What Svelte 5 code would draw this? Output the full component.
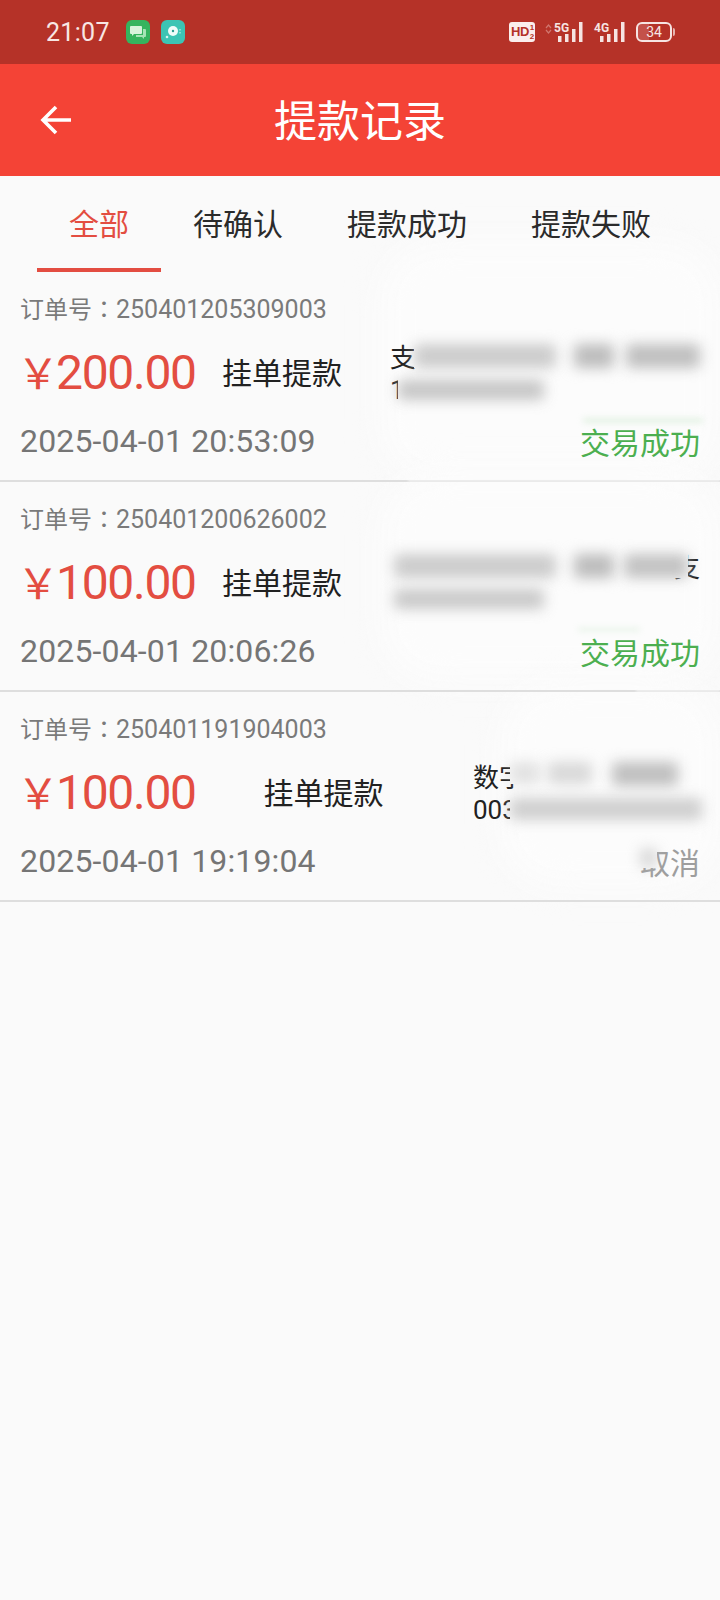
<script>
  const tabs = ['全部', '待确认', '提款成功', '提款失败'];
  const orders = [
    {
      no: '250401205309003', amount: '200.00', time: '2025-04-01 20:53:09',
      status: '交易成功', ok: true, line1: '支', line2: '1', end: '', acct: 'wide',
      halo: { x: 380, y: -30, w: 340, h: 240 },
      smears: [
        { x: 414, y: 72, w: 142, h: 24, o: 0.75 },
        { x: 574, y: 72, w: 40, h: 24, o: 1 }, { x: 626, y: 72, w: 74, h: 24, o: 0.95 },
        { x: 398, y: 108, w: 146, h: 20, o: 0.85 }
      ],
      tint: { x: 583, y: 146, w: 120, h: 5 }, wash: 408
    },
    {
      no: '250401200626002', amount: '100.00', time: '2025-04-01 20:06:26',
      status: '交易成功', ok: true, line1: '', line2: '', end: '支', acct: 'wide',
      halo: { x: 380, y: -10, w: 340, h: 210 },
      smears: [
        { x: 394, y: 72, w: 162, h: 24, o: 0.75 }, { x: 574, y: 72, w: 40, h: 24, o: 1 },
        { x: 624, y: 72, w: 64, h: 24, o: 0.9 }, { x: 394, y: 107, w: 150, h: 20, o: 0.8 }
      ],
      tint: { x: 578, y: 146, w: 62, h: 3 }, wash: 636
    },
    {
      no: '250401191904003', amount: '100.00', time: '2025-04-01 19:19:04',
      status: '取消', ok: false, line1: '数字', line2: '003', end: '', acct: 'narrow',
      halo: { x: 500, y: -10, w: 220, h: 205 },
      smears: [
        { x: 510, y: 70, w: 30, h: 22, o: 0.4 }, { x: 548, y: 70, w: 44, h: 22, o: 0.55 },
        { x: 612, y: 70, w: 66, h: 24, o: 0.95 }, { x: 510, y: 106, w: 192, h: 22, o: 0.7 },
        { x: 640, y: 156, w: 17, h: 20, o: 0.55 }
      ],
      tint: null, wash: null
    }
  ];
</script>

<div class="page">
  <div class="statusbar">
    <span class="clock">21:07</span>
    <svg class="appicon" viewBox="0 0 24 24" width="24" height="24">
      <rect width="24" height="24" rx="6" fill="#35b45e" />
      <path d="M5 6h10a1 1 0 0 1 1 1v6a1 1 0 0 1-1 1H8l-2 2v-2H5a1 1 0 0 1-1-1V7a1 1 0 0 1 1-1z" fill="#d8f3dc" />
      <path d="M17 9h2a1 1 0 0 1 1 1v6a1 1 0 0 1-1 1h-1v2l-2-2h-6v-2h7z" fill="#a5e4b5" />
    </svg>
    <svg class="appicon second" viewBox="0 0 24 24" width="24" height="24">
      <rect width="24" height="24" rx="6" fill="#3cc4b4" />
      <circle cx="12" cy="11" r="5" fill="#f0fbf9" />
      <circle cx="12" cy="11" r="1.2" fill="#2a9d90" />
      <circle cx="6" cy="17" r="1.3" fill="#d5f5f0" />
      <rect x="18.5" y="9" width="1" height="1.5" fill="#d5f5f0" />
      <rect x="18.5" y="12" width="1" height="1.5" fill="#d5f5f0" />
    </svg>
    <div class="sysicons">
      <span class="hd">HD<small>1<br />2</small></span>
      <div class="net first">
        <svg class="updown" viewBox="0 0 7 10" width="7" height="10"><path d="M1 4l2.5-3L6 4M1 6l2.5 3L6 6" fill="none" stroke="#d0766e" stroke-width="1.2" /></svg>
        <span class="gen">5G</span>
        <svg viewBox="0 0 26 20" width="26" height="20"><path d="M1 14h3.5v6H1zM8 12h3.5v8H8zM15 7h3.5v13H15zM22 0h3.5v20H22z" fill="#f6e4e2" /></svg>
      </div>
      <div class="net">
        <span class="gen">4G</span>
        <svg viewBox="0 0 26 20" width="26" height="20"><path d="M1 14h3.5v6H1zM8 12h3.5v8H8zM15 7h3.5v13H15zM22 0h3.5v20H22z" fill="#f6e4e2" /></svg>
      </div>
      <div class="battery"><span>34</span></div>
    </div>
  </div>

  <header class="appbar">
    <svg class="back" viewBox="0 0 32 32" width="32" height="32" aria-label="返回">
      <path d="M31 16H3M16 3 3 16l13 13" fill="none" stroke="#fff" stroke-width="3.6" />
    </svg>
    <h1>提款记录</h1>
  </header>

  <nav class="tabs">
    {#each tabs as tab, i}
      <div class="tab" class:active={i === 0}>{tab}</div>
    {/each}
  </nav>

  {#each orders as order}
    <section class="card">
      <div class="no"><span class="label">订单号<span class="colon">：</span></span>{order.no}</div>
      <div class="mid">
        <div class="amount"><span class="yen">￥</span>{order.amount}</div>
        <div class="type">挂单提款</div>
        <div class="acct {order.acct}">
          <div class="line"><span>{order.line1}</span><span>{order.end}</span></div>
          <div class="line">{order.line2}</div>
        </div>
      </div>
      <div class="bottom">
        <span class="time">{order.time}</span>
        <span class="status" class:ok={order.ok}>{order.status}</span>
      </div>

      <div class="halo" style="left:{order.halo.x}px;top:{order.halo.y}px;width:{order.halo.w}px;height:{order.halo.h}px"></div>
      {#each order.smears as s}
        <div class="cover" style="left:{s.x}px;top:{s.y}px;width:{s.w}px;height:{s.h}px"></div>
      {/each}
      {#each order.smears as s}
        <div class="smear" style="left:{s.x}px;top:{s.y}px;width:{s.w}px;height:{s.h}px;opacity:{s.o}"></div>
      {/each}
      {#if order.tint}
        <div class="tint" style="left:{order.tint.x}px;top:{order.tint.y}px;width:{order.tint.w}px;height:{order.tint.h}px"></div>
      {/if}
      {#if order.wash}
        <div class="wash" style="left:{order.wash}px;width:{720 - order.wash}px"></div>
      {/if}
    </section>
  {/each}
</div>

<style>
  :global(body) {
    margin: 0;
    background: #fafafa;
  }

  .page {
    width: 720px;
    height: 1600px;
    overflow: hidden;
    background: #fafafa;
    isolation: isolate;
    font-family: Roboto, "Noto Sans CJK SC", sans-serif;
    color: #212121;
  }

  .statusbar {
    height: 64px;
    background: #b53228;
    display: flex;
    align-items: center;
    padding: 0 48px 0 46px;
    box-sizing: border-box;
    color: #f8e6e4;
  }

  .clock {
    font-size: 25px;
    width: 80px;
    letter-spacing: 0.3px;
  }

  .appicon.second {
    margin-left: 11px;
  }

  .sysicons {
    margin-left: auto;
    display: flex;
    align-items: center;
    gap: 12px;
  }

  .hd {
    width: 26px;
    box-sizing: border-box;
    background: #fbeeed;
    color: #b53228;
    border-radius: 3px;
    font: 700 13px/20px "Liberation Sans", sans-serif;
    letter-spacing: -0.5px;
    padding-left: 2px;
    height: 20px;
    display: flex;
    align-items: center;
    margin-right: 7px;
  }

  .hd small {
    font-size: 8px;
    line-height: 9px;
    margin-left: 1px;
  }

  .net {
    position: relative;
    width: 30px;
    height: 20px;
    display: flex;
    justify-content: flex-end;
  }

  .net.first {
    width: 28px;
  }

  .gen {
    position: absolute;
    left: 0;
    top: 0;
    font: 700 12px/13px Roboto, sans-serif;
    color: #f6e4e2;
  }

  .updown {
    position: absolute;
    left: -9px;
    top: 2px;
  }

  .net svg:last-child {
    margin-right: -1px;
  }

  .battery {
    width: 36px;
    height: 20px;
    box-sizing: border-box;
    border: 2px solid #f6e4e2;
    border-radius: 6px;
    display: flex;
    align-items: center;
    justify-content: center;
    font-size: 14px;
    color: #f6e4e2;
    position: relative;
    background: linear-gradient(90deg, #c4514a 34%, transparent 34%);
  }

  .battery::after {
    content: "";
    position: absolute;
    right: -5px;
    top: 4px;
    width: 2px;
    height: 8px;
    background: #e6b3ae;
    border-radius: 0 2px 2px 0;
  }

  .appbar {
    height: 112px;
    background: #f44336;
    display: grid;
    grid-template-columns: 1fr auto 1fr;
    align-items: center;
    color: #fff;
  }

  .back {
    margin-left: 40px;
  }

  h1 {
    margin: 0;
    padding-top: 5px;
    font-size: 43px;
    font-weight: 400;
    line-height: 1;
  }

  .tabs {
    height: 96px;
    display: flex;
    padding-left: 37px;
    font-size: 30px;
    color: #2b2b2b;
  }

  .tab {
    padding: 0 32px 4px;
    display: flex;
    align-items: center;
    box-sizing: border-box;
  }

  .tab.active {
    color: #e34d41;
    border-bottom: 4px solid #e34d41;
    padding-bottom: 0;
  }

  .card {
    position: relative;
    height: 210px;
    box-sizing: border-box;
    border-bottom: 2px solid #dedede;
    padding: 18px 20px 0;
  }

  .no {
    height: 36px;
    margin-bottom: 2px;
    font-size: 25px;
    line-height: 36px;
    color: #7a7a7a;
    overflow: hidden;
  }

  .label {
    font-size: 24px;
  }

  .colon {
    font-family: "Noto Sans CJK TC", sans-serif;
  }

  .mid {
    display: flex;
    justify-content: space-between;
    align-items: center;
    height: 84px;
  }

  .amount {
    width: 176px;
    font-size: 48px;
    letter-spacing: -1.3px;
    color: #e34d41;
    white-space: nowrap;
    line-height: 1;
    padding-top: 6px;
  }

  .yen {
    font-size: 42px;
    margin: 0 -3px;
    letter-spacing: 0;
  }

  .type {
    font-size: 30px;
    margin-right: 22px;
    padding-top: 2px;
  }

  .acct {
    font-size: 26px;
    line-height: 32px;
    padding-top: 8px;
  }

  .acct.wide {
    width: 310px;
  }

  .acct.narrow {
    width: 227px;
  }

  .line {
    display: flex;
    justify-content: space-between;
    min-height: 32px;
  }

  .bottom {
    display: flex;
    justify-content: space-between;
    align-items: center;
    height: 48px;
    margin-top: 5px;
  }

  .time {
    font-size: 32px;
    letter-spacing: 0.15px;
    color: #757575;
  }

  .status {
    font-size: 30px;
    color: #9e9e9e;
  }

  .status.ok {
    color: #4caf50;
  }

  .halo {
    position: absolute;
    background: #fcfcfc;
    border-radius: 60px;
    filter: blur(16px);
    z-index: -1;
  }

  .cover {
    position: absolute;
    background: #fbfbfb;
  }

  .smear {
    position: absolute;
    background: #bcbcbc;
    border-radius: 4px;
    filter: blur(7px);
  }

  .tint {
    position: absolute;
    background: #c8e6c9;
    filter: blur(3px);
    opacity: 0.5;
  }

  .wash {
    position: absolute;
    top: 207px;
    height: 3px;
    background: #fbfbfb;
    opacity: 0.6;
    filter: blur(1px);
  }
</style>
